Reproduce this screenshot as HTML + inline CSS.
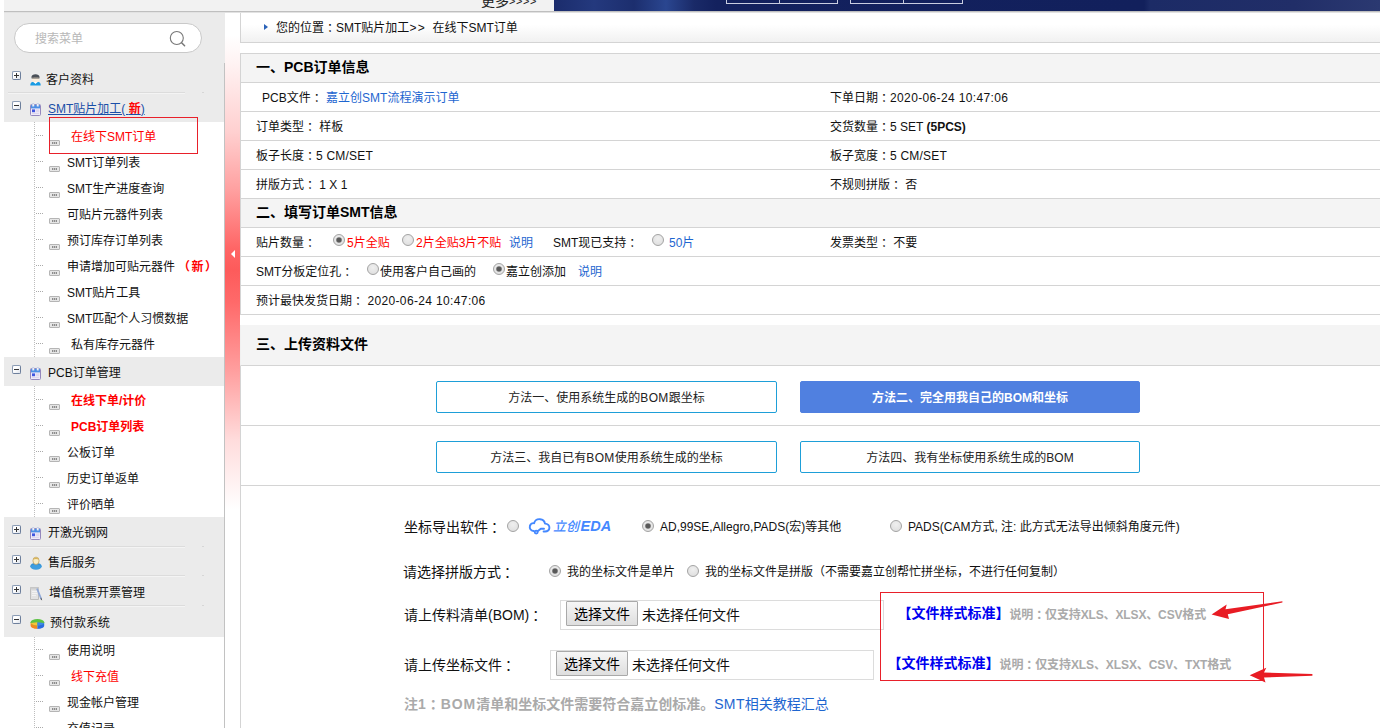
<!DOCTYPE html>
<html lang="zh-CN">
<head>
<meta charset="utf-8">
<title>在线下SMT订单</title>
<style>
*{box-sizing:border-box;margin:0;padding:0}
html,body{width:1380px;height:728px;overflow:hidden;background:#fff}
body{position:relative;font-family:"Liberation Sans","Noto Sans CJK SC",sans-serif;font-size:12px;color:#111}
.a{position:absolute}
.t{position:absolute;white-space:nowrap;height:20px;line-height:20px}
.b{font-weight:bold}
.red{color:#f00}
.blue{color:#1e66d0}
/* top strip */
#top{left:4px;top:0;width:1376px;height:13px;background:#f2f2f2;border-bottom:1px solid #e2e2e2}
#top:after{content:"";position:absolute;left:0;top:11px;width:100%;height:1px;background:#bfbfbf}
#banner{left:554px;top:0;width:826px;height:11px;background:linear-gradient(to right,#1b2c6c 0,#24397e 40px,#1c2e6e 80px,#2a4690 112px,#1a2a68 140px,#13215e 162px,#12205c 590px,#1c2b66 596px,#212e68 740px,#2b3971 826px)}
/* sidebar */
#side{left:4px;top:13px;width:221px;height:715px;background:#fff}
.grp{position:absolute;width:221px;background:#ebebeb}
.gl{position:absolute;width:177px;height:1px;background:#dcdcdc}
.pm{position:absolute;width:9px;height:9px;border:1px solid #8a9bb4;border-right-color:#6d7f9c;border-bottom-color:#6d7f9c;border-radius:2px;background:linear-gradient(135deg,#fff 40%,#dfe4ec)}
.pm:before{content:"";position:absolute;left:1px;top:3px;width:5px;height:1px;background:#333}
.pm.plus:after{content:"";position:absolute;left:3px;top:1px;width:1px;height:5px;background:#333}
.ic{position:absolute;left:45px;width:11px;height:6px;border:1px solid #b5b5b5;background:#e6e6e6;border-radius:1px}
.ic:before{content:"";position:absolute;left:2px;top:1px;width:5px;height:2px;background:repeating-linear-gradient(to right,#8c8c8c 0,#8c8c8c 1.4px,#c4c4c4 1.4px,#c4c4c4 2px)}
.hd{position:absolute;left:32px;width:7px;height:0;border-top:1px dotted #aaa}
.s{font-size:12px}
/* main */
#handle{left:225px;top:13px;width:15px;height:715px;background:linear-gradient(to bottom,#fff 0,#fff 22px,#fff3f3 50px,#ffcfcf 120px,#ffa0a0 177px,#ff6666 235px,#fd5b5b 257px,#ff6a6a 290px,#ff9e9e 357px,#ffdcdc 427px,#fff 497px)}
.row{position:absolute;left:240px;width:1140px;border-bottom:1px solid #d4d4d4;border-left:1px solid #d4d4d4;background:#fff}
.hrow{background:#f4f4f4}
.h{font-size:14px;font-weight:bold;color:#000}
.btn{position:absolute;height:32px;border:1px solid #1e9fd8;border-radius:2px;background:#fff;text-align:center;line-height:32px;font-size:12px;color:#222}
.btn.on{background:#5080e0;border-color:#5080e0;color:#fff;font-weight:bold}
.radio{position:absolute;width:12px;height:12px;border-radius:50%;border:1px solid #a3a3a3;background:radial-gradient(circle at 50% 35%,#efefef 0%,#dcdcdc 100%)}
.radio.on:after{content:"";position:absolute;left:3px;top:3px;width:4px;height:4px;border-radius:50%;background:#585858;box-shadow:0 0 0 .8px #666}
.cc{position:relative;left:3px}
.n{letter-spacing:.36px}
.n2{letter-spacing:.2px}
.f13{font-size:13px}
.f14{font-size:14px}
.fbtn{position:absolute;height:25px;border:1px solid #a9a9a9;background:linear-gradient(#f6f6f6,#dedede);font-size:14px;line-height:24px;text-align:center;color:#000;border-radius:1px}
.fbox{position:absolute;height:30px;border:1px solid #dcdcdc;background:#fff}
#search{left:14px;top:23px;width:188px;height:30px;border:1px solid #c9c9c9;border-radius:15px;background:#fff}
</style>
</head>
<body>

<div id="top" class="a"></div>
<div class="t" style="left:481px;top:-9px;font-size:14px;color:#222">更多<span style="font-size:11px;letter-spacing:.6px;position:relative;top:-1px">&gt;&gt;&gt;&gt;</span></div>
<div id="banner" class="a"></div>
<div class="a" style="left:726px;top:-6px;width:112px;height:10px;border:1px solid #c9cde0"></div>
<div class="a" style="left:779px;top:-6px;width:1px;height:10px;background:#c9cde0"></div>
<div class="a" style="left:850px;top:-6px;width:113px;height:10px;border:1px solid #c9cde0"></div>
<div class="a" style="left:903px;top:-6px;width:1px;height:10px;background:#c9cde0"></div>
<div id="side" class="a"></div>
<div class="a grp" style="left:4px;top:13px;height:109px"></div>
<div class="a grp" style="left:4px;top:357px;height:29px"></div>
<div class="a grp" style="left:4px;top:517px;height:120px"></div>
<div class="a gl" style="left:8px;top:92px"></div><div class="a" style="left:8px;top:93px;width:177px;height:1px;background:#f4f4f4"></div><div class="a" style="left:202px;top:92px;width:2px;height:1px;background:#d6d6d6"></div>
<div class="a gl" style="left:8px;top:546px"></div><div class="a" style="left:8px;top:547px;width:177px;height:1px;background:#f4f4f4"></div><div class="a" style="left:202px;top:546px;width:2px;height:1px;background:#d6d6d6"></div>
<div class="a gl" style="left:8px;top:575px"></div><div class="a" style="left:8px;top:576px;width:177px;height:1px;background:#f4f4f4"></div><div class="a" style="left:202px;top:575px;width:2px;height:1px;background:#d6d6d6"></div>
<div class="a gl" style="left:8px;top:605px"></div><div class="a" style="left:8px;top:606px;width:177px;height:1px;background:#f4f4f4"></div><div class="a" style="left:202px;top:605px;width:2px;height:1px;background:#d6d6d6"></div>
<div class="a" id="search"></div>
<div class="t " style="left:35px;top:29px;color:#b8b8b8;font-size:12px">搜索菜单</div>
<svg class="a" style="left:166px;top:28px" width="24" height="24" viewBox="0 0 24 24"><circle cx="10.8" cy="10" r="6.5" fill="none" stroke="#777" stroke-width="1.1"/><path d="M15.6 14.8 L18.6 17.8" stroke="#777" stroke-width="1.5" stroke-linecap="round"/></svg>
<div class="a" style="left:34px;top:122px;width:0;height:235px;border-left:1px dotted #bdbdbd"></div>
<div class="a" style="left:34px;top:386px;width:0;height:131px;border-left:1px dotted #bdbdbd"></div>
<div class="a" style="left:34px;top:637px;width:0;height:91px;border-left:1px dotted #bdbdbd"></div>
<div class="pm plus" style="left:12px;top:71px"></div>
<svg class="a" style="left:30px;top:73px" width="11" height="13" viewBox="0 0 11 13"><path d="M0.3 12.6 C0.3 9.4 2.2 8.6 5.5 8.6 C8.8 8.6 10.7 9.4 10.7 12.6 Z" fill="#1a9ce4"/><ellipse cx="5.5" cy="6.2" rx="3.6" ry="3.4" fill="#fbeedd"/><path d="M1.4 4.6 C1.2 0.2 9.8 0.2 9.6 4.6 C8 3.8 3 3.8 1.4 4.6 Z" fill="#4a5058"/><path d="M1.6 4.4 h7.8 v1 h-7.8 z" fill="#2e3238"/><path d="M3.6 9 L5.5 11 L7.4 9 Z" fill="#fff"/></svg>
<div class="t s" style="left:46px;top:70px;">客户资料</div>
<div class="pm" style="left:12px;top:101px"></div>
<svg class="a" style="left:30px;top:103px" width="11" height="13" viewBox="0 0 11 13"><rect x="0.5" y="1.5" width="10" height="11" rx="1" fill="#efeaf8" stroke="#9488bd"/><rect x="1" y="2" width="9" height="3.4" fill="#4b8fe6"/><rect x="2.2" y="0.6" width="2" height="3" rx=".6" fill="#fff" stroke="#8fa6d8" stroke-width=".5"/><rect x="6.8" y="0.6" width="2" height="3" rx=".6" fill="#fff" stroke="#8fa6d8" stroke-width=".5"/><rect x="2" y="6.4" width="3" height="2.8" fill="#3f55e0"/><rect x="5.6" y="6.6" width="3.6" height="1" fill="#cfc8e6"/><rect x="5.6" y="8.2" width="3.6" height="1" fill="#d9d3ec"/><rect x="2" y="10" width="7" height="1" fill="#dcd6ee"/></svg>
<div class="t s" style="left:48px;top:99px;"><span style="text-decoration:underline;color:#1a4fa8">SMT贴片加工( <b class="red">新</b>)</span></div>
<div class="pm" style="left:12px;top:365px"></div>
<svg class="a" style="left:30px;top:367px" width="11" height="13" viewBox="0 0 11 13"><rect x="0.5" y="1.5" width="10" height="11" rx="1" fill="#efeaf8" stroke="#9488bd"/><rect x="1" y="2" width="9" height="3.4" fill="#4b8fe6"/><rect x="2.2" y="0.6" width="2" height="3" rx=".6" fill="#fff" stroke="#8fa6d8" stroke-width=".5"/><rect x="6.8" y="0.6" width="2" height="3" rx=".6" fill="#fff" stroke="#8fa6d8" stroke-width=".5"/><rect x="2" y="6.4" width="3" height="2.8" fill="#3f55e0"/><rect x="5.6" y="6.6" width="3.6" height="1" fill="#cfc8e6"/><rect x="5.6" y="8.2" width="3.6" height="1" fill="#d9d3ec"/><rect x="2" y="10" width="7" height="1" fill="#dcd6ee"/></svg>
<div class="t s" style="left:48px;top:363px;">PCB订单管理</div>
<div class="pm plus" style="left:12px;top:525px"></div>
<svg class="a" style="left:30px;top:527px" width="11" height="13" viewBox="0 0 11 13"><rect x="0.5" y="1.5" width="10" height="11" rx="1" fill="#efeaf8" stroke="#9488bd"/><rect x="1" y="2" width="9" height="3.4" fill="#4b8fe6"/><rect x="2.2" y="0.6" width="2" height="3" rx=".6" fill="#fff" stroke="#8fa6d8" stroke-width=".5"/><rect x="6.8" y="0.6" width="2" height="3" rx=".6" fill="#fff" stroke="#8fa6d8" stroke-width=".5"/><rect x="2" y="6.4" width="3" height="2.8" fill="#3f55e0"/><rect x="5.6" y="6.6" width="3.6" height="1" fill="#cfc8e6"/><rect x="5.6" y="8.2" width="3.6" height="1" fill="#d9d3ec"/><rect x="2" y="10" width="7" height="1" fill="#dcd6ee"/></svg>
<div class="t s" style="left:48px;top:523px;">开激光钢网</div>
<div class="pm plus" style="left:12px;top:555px"></div>
<svg class="a" style="left:30px;top:556px" width="12" height="14" viewBox="0 0 12 14"><ellipse cx="6" cy="10.2" rx="5.8" ry="3.5" fill="#3f9edf"/><path d="M1 9.5 C2.5 7.6 9.5 7.6 11 9.5" fill="none" stroke="#2d84c8" stroke-width=".6"/><ellipse cx="6" cy="4.8" rx="3.1" ry="3.7" fill="#f9edc4" stroke="#b99a55" stroke-width=".7"/><path d="M3.2 3.6 C3.6 1.2 8.4 1.2 8.8 3.6 C7.6 2.8 4.4 2.8 3.2 3.6 Z" fill="#d8b45a"/></svg>
<div class="t s" style="left:48px;top:553px;">售后服务</div>
<div class="pm plus" style="left:12px;top:585px"></div>
<svg class="a" style="left:29px;top:586px" width="14" height="15" viewBox="0 0 14 15"><path d="M1.5 1.5 h8 v12 h-8 z" fill="#e2e2e2" stroke="#bdbdbd"/><path d="M1.5 1.5 h8 v2 h-8 z" fill="#cfcfcf"/><path d="M3 5.5h5M3 7.5h5M3 9.5h4" stroke="#f4f4f4" stroke-width=".9"/><path d="M8.2 3.2 L12.2 12.8" stroke="#8fa8d8" stroke-width="1.7" stroke-linecap="round"/><path d="M12 12.2 L12.6 13.8" stroke="#666" stroke-width="1" stroke-linecap="round"/></svg>
<div class="t s" style="left:49px;top:583px;">增值税票开票管理</div>
<div class="pm" style="left:12px;top:615px"></div>
<svg class="a" style="left:30px;top:618px" width="15" height="12" viewBox="0 0 15 12"><path d="M0.6 4.2 V7.6 C0.6 9.6 3.6 11 7.4 11 V6 Z" fill="#f0891f"/><path d="M14.2 4.2 V7.6 C14.2 9.6 11.2 11 7.4 11 V6 Z" fill="#2a6be0"/><ellipse cx="7.4" cy="4.2" rx="6.8" ry="3.2" fill="#5cc244"/><path d="M7.4 4.2 L0.8 5 C1.4 6.6 4 7.4 7.4 7.4 Z" fill="#f6c23a"/><path d="M7.4 4.2 L14 5 C13.4 6.6 10.8 7.4 7.4 7.4 Z" fill="#3d86ee"/></svg>
<div class="t s" style="left:50px;top:613px;">预付款系统</div>
<div class="hd" style="left:36px;top:135px"></div>
<div class="ic" style="left:49px;top:140px"></div>
<div class="t s red" style="left:71px;top:127px;">在线下SMT订单</div>
<div class="hd" style="left:36px;top:161px"></div>
<div class="ic" style="left:49px;top:166px"></div>
<div class="t s" style="left:67px;top:153px;">SMT订单列表</div>
<div class="hd" style="left:36px;top:187px"></div>
<div class="ic" style="left:49px;top:192px"></div>
<div class="t s" style="left:67px;top:179px;">SMT生产进度查询</div>
<div class="hd" style="left:36px;top:213px"></div>
<div class="ic" style="left:49px;top:218px"></div>
<div class="t s" style="left:67px;top:205px;">可贴片元器件列表</div>
<div class="hd" style="left:36px;top:239px"></div>
<div class="ic" style="left:49px;top:244px"></div>
<div class="t s" style="left:67px;top:231px;">预订库存订单列表</div>
<div class="hd" style="left:36px;top:265px"></div>
<div class="ic" style="left:49px;top:270px"></div>
<div class="t s" style="left:67px;top:257px;">申请增加可贴元器件<b class="red" style="letter-spacing:1.5px;margin-left:3px">（新）</b></div>
<div class="hd" style="left:36px;top:291px"></div>
<div class="ic" style="left:49px;top:296px"></div>
<div class="t s" style="left:67px;top:283px;">SMT贴片工具</div>
<div class="hd" style="left:36px;top:317px"></div>
<div class="ic" style="left:49px;top:322px"></div>
<div class="t s" style="left:67px;top:309px;">SMT匹配个人习惯数据</div>
<div class="hd" style="left:36px;top:343px"></div>
<div class="ic" style="left:49px;top:348px"></div>
<div class="t s" style="left:71px;top:335px;">私有库存元器件</div>
<div class="hd" style="left:36px;top:399px"></div>
<div class="ic" style="left:49px;top:404px"></div>
<div class="t s red b" style="left:71px;top:391px;">在线下单/计价</div>
<div class="hd" style="left:36px;top:425px"></div>
<div class="ic" style="left:49px;top:430px"></div>
<div class="t s red b" style="left:71px;top:417px;">PCB订单列表</div>
<div class="hd" style="left:36px;top:451px"></div>
<div class="ic" style="left:49px;top:456px"></div>
<div class="t s" style="left:67px;top:443px;">公板订单</div>
<div class="hd" style="left:36px;top:477px"></div>
<div class="ic" style="left:49px;top:482px"></div>
<div class="t s" style="left:67px;top:469px;">历史订单返单</div>
<div class="hd" style="left:36px;top:503px"></div>
<div class="ic" style="left:49px;top:508px"></div>
<div class="t s" style="left:67px;top:495px;">评价晒单</div>
<div class="hd" style="left:36px;top:649px"></div>
<div class="ic" style="left:49px;top:654px"></div>
<div class="t s" style="left:67px;top:641px;">使用说明</div>
<div class="hd" style="left:36px;top:675px"></div>
<div class="ic" style="left:49px;top:680px"></div>
<div class="t s red" style="left:71px;top:667px;">线下充值</div>
<div class="hd" style="left:36px;top:701px"></div>
<div class="ic" style="left:49px;top:706px"></div>
<div class="t s" style="left:67px;top:693px;">现金帐户管理</div>
<div class="hd" style="left:36px;top:727px"></div>
<div class="ic" style="left:49px;top:732px"></div>
<div class="t s" style="left:67px;top:719px;">充值记录</div>
<div class="a" style="left:49px;top:117px;width:149px;height:37px;border:1px solid #e8202a"></div>
<div class="a" style="left:224px;top:63px;width:1px;height:665px;background:#c2c2c2"></div>
<div id="handle" class="a"></div>
<div class="a" style="left:231px;top:250px;width:0;height:0;border:4px solid transparent;border-right:4px solid #fff;border-left:0"></div>
<div class="row " style="top:13px;height:30px;background:linear-gradient(#fff 40%,#f1f1f1)"></div>
<div class="a" style="left:264px;top:24px;width:0;height:0;border:3px solid transparent;border-left:4px solid #2a62b8;border-right:0"></div>
<div class="t " style="left:276px;top:18px;">您的位置<span class="cc">：</span>SMT贴片加工<span style="letter-spacing:1.3px">&gt;&gt;</span></div>
<div class="t " style="left:432.5px;top:18px;">在线下SMT订单</div>
<div class="row hrow" style="top:53px;height:30px;border-top:1px solid #d4d4d4"></div>
<div class="t h" style="left:256px;top:57px;">一、PCB订单信息</div>
<div class="row " style="top:83px;height:29px;"></div>
<div class="row " style="top:112px;height:29px;"></div>
<div class="row " style="top:141px;height:29px;"></div>
<div class="row " style="top:170px;height:29px;"></div>
<div class="t " style="left:262px;top:88px;">PCB文件<span class="cc">：</span> <span class="blue">嘉立创SMT流程演示订单</span></div>
<div class="t " style="left:830px;top:88px;">下单日期<span class="cc">：</span><span class="n">2020-06-24 10:47:06</span></div>
<div class="t " style="left:256px;top:117px;">订单类型<span class="cc">：</span> 样板</div>
<div class="t " style="left:830px;top:117px;">交货数量<span class="cc">：</span>5 SET <b>(5PCS)</b></div>
<div class="t " style="left:256px;top:146px;">板子长度<span class="cc">：</span><span class="n2">5 CM/SET</span></div>
<div class="t " style="left:830px;top:146px;">板子宽度<span class="cc">：</span><span class="n2">5 CM/SET</span></div>
<div class="t " style="left:256px;top:175px;">拼版方式<span class="cc">：</span> 1 X 1</div>
<div class="t " style="left:830px;top:175px;">不规则拼版<span class="cc">：</span> 否</div>
<div class="row hrow" style="top:199px;height:29px;"></div>
<div class="t h" style="left:256px;top:202px;">二、填写订单SMT信息</div>
<div class="row " style="top:228px;height:29px;"></div>
<div class="row " style="top:257px;height:29px;"></div>
<div class="row " style="top:286px;height:29px;"></div>
<div class="t " style="left:256px;top:233px;">贴片数量<span class="cc">：</span></div>
<div class="radio on" style="left:333px;top:234px"></div>
<div class="t red" style="left:347px;top:233px;">5片全贴</div>
<div class="radio" style="left:402px;top:234px"></div>
<div class="t red" style="left:416px;top:233px;">2片全贴3片不贴</div>
<div class="t blue" style="left:509px;top:233px;">说明</div>
<div class="t " style="left:553px;top:233px;">SMT现已支持<span class="cc">：</span></div>
<div class="radio" style="left:652px;top:234px"></div>
<div class="t blue" style="left:669px;top:233px;">50片</div>
<div class="t " style="left:830px;top:233px;">发票类型<span class="cc">：</span> 不要</div>
<div class="t " style="left:256px;top:262px;">SMT分板定位孔<span class="cc">：</span></div>
<div class="radio" style="left:367px;top:263px"></div>
<div class="t " style="left:380px;top:262px;">使用客户自己画的</div>
<div class="radio on" style="left:493px;top:263px"></div>
<div class="t " style="left:506px;top:262px;">嘉立创添加</div>
<div class="t blue" style="left:578px;top:262px;">说明</div>
<div class="t " style="left:256px;top:291px;">预计最快发货日期<span class="cc">：</span> <span class="n">2020-06-24 10:47:06</span></div>
<div class="row hrow" style="top:325px;height:41px;border-left-color:#f0f0f0"></div>
<div class="t h" style="left:256px;top:334px;">三、上传资料文件</div>
<div class="row " style="top:366px;height:60px;"></div>
<div class="row " style="top:426px;height:60px;"></div>
<div class="btn" style="left:436px;top:381px;width:341px">方法一、使用系统生成的<span class="n">BOM</span>跟坐标</div>
<div class="btn on" style="left:800px;top:381px;width:340px">方法二、完全用我自己的BOM和坐标</div>
<div class="btn" style="left:436px;top:441px;width:341px">方法三、我自已有<span class="n">BOM</span>使用系统生成的坐标</div>
<div class="btn" style="left:800px;top:441px;width:340px">方法四、我有坐标使用系统生成的BOM</div>
<div class="a" style="left:240px;top:486px;width:1px;height:242px;background:#d4d4d4"></div>
<div class="t f14" style="left:404px;top:517px;">坐标导出软件<span class="cc">：</span></div>
<div class="radio big" style="left:507px;top:520px"></div>
<svg class="a" style="left:528px;top:516px" width="88" height="20" viewBox="0 0 88 20"><g transform="translate(0,0.7)" fill="none" stroke="#4488ff" stroke-width="1.9" stroke-linecap="round" stroke-linejoin="round"><path d="M5.6 14.3 C2.6 13.9 1.3 11.6 1.9 9.4 C2.4 7.3 4.3 6.3 6.1 6.5 C6.9 3.6 9.4 2.3 12 2.5 C14.8 2.8 16.6 4.6 17 6.9 C19.8 6.9 21.6 8.9 21.4 11.2 C21.2 13.6 19.3 14.8 17 14.8 L15.6 14.8"/><circle cx="8.2" cy="15.4" r="1.5"/><path d="M9.6 14.5 L12.8 12 L16 12"/></g><text x="25" y="14.8" font-family="Liberation Sans,Noto Sans CJK SC,sans-serif" font-size="13.5" fill="#4488ff"><tspan font-style="italic" font-weight="500" font-size="13" font-family="Noto Sans CJK SC,sans-serif">立创</tspan><tspan font-style="italic" font-weight="bold" dx="1.5" font-size="14.5">EDA</tspan></text></svg>
<div class="radio on big" style="left:642px;top:520px"></div>
<div class="t " style="left:660px;top:517px;">AD,99SE,Allegro,PADS(宏)等其他</div>
<div class="radio big" style="left:890px;top:520px"></div>
<div class="t " style="left:908px;top:517px;">PADS(CAM方式, 注: 此方式无法导出倾斜角度元件)</div>
<div class="t f14" style="left:403px;top:562px;">请选择拼版方式<span class="cc">：</span></div>
<div class="radio on big" style="left:549px;top:565px"></div>
<div class="t " style="left:567px;top:562px;">我的坐标文件是单片</div>
<div class="radio big" style="left:687px;top:565px"></div>
<div class="t " style="left:705px;top:562px;">我的坐标文件是拼版（不需要嘉立创帮忙拼坐标，不进行任何复制）</div>
<div class="t f14" style="left:404px;top:605px;">请上传料清单(BOM)<span class="cc">：</span></div>
<div class="fbox" style="left:560px;top:600px;width:324px;height:30px"></div>
<div class="fbtn" style="left:566px;top:601px;width:72px">选择文件</div>
<div class="t f14" style="left:642px;top:605px;">未选择任何文件</div>
<div class="t f14" style="left:404px;top:655px;">请上传坐标文件<span class="cc">：</span></div>
<div class="fbox" style="left:550px;top:650px;width:324px"></div>
<div class="fbtn" style="left:556px;top:651px;width:72px">选择文件</div>
<div class="t f14" style="left:632px;top:655px;">未选择任何文件</div>
<div class="t f14" style="left:404px;top:694px;"><b style="color:#aaa">注<span style="letter-spacing:1px">1</span><span class="cc">：</span><span style="letter-spacing:.9px">BOM</span>清单和坐标文件需要符合嘉立创标准。</b><span style="color:#1e66d0"><span class="n">SMT</span>相关教程汇总</span></div>
<div class="a" style="left:880px;top:592px;width:384px;height:89px;border:1px solid #e8202a"></div>
<div class="t " style="left:897.5px;top:603px;"><b style="color:#0000f0;font-size:14px">【文件样式标准】</b><b style="color:#aaa;letter-spacing:-.14px;position:relative;top:1px">说明<span class="cc">：</span>仅支持XLS、XLSX、CSV格式</b></div>
<div class="t " style="left:887.5px;top:653px;"><b style="color:#0000f0;font-size:14px">【文件样式标准】</b><b style="color:#aaa;letter-spacing:-.1px;position:relative;top:1px">说明<span class="cc">：</span>仅支持XLS、XLSX、CSV、TXT格式</b></div>
<svg class="a" style="left:1200px;top:590px" width="130" height="100" viewBox="0 0 130 100"><path d="M11.6 24.5 L26.7 14.6 L25.5 19.2 L82.4 11.2 L82.4 12.6 L27.8 24.3 L29 29 Z" fill="#e81c24"/><path d="M49.7 85.2 L66.3 77.8 L64 82.6 L112.4 84 L112.4 85.8 L64 87.4 L65.5 92.4 Z" fill="#e81c24"/></svg>
</body>
</html>
